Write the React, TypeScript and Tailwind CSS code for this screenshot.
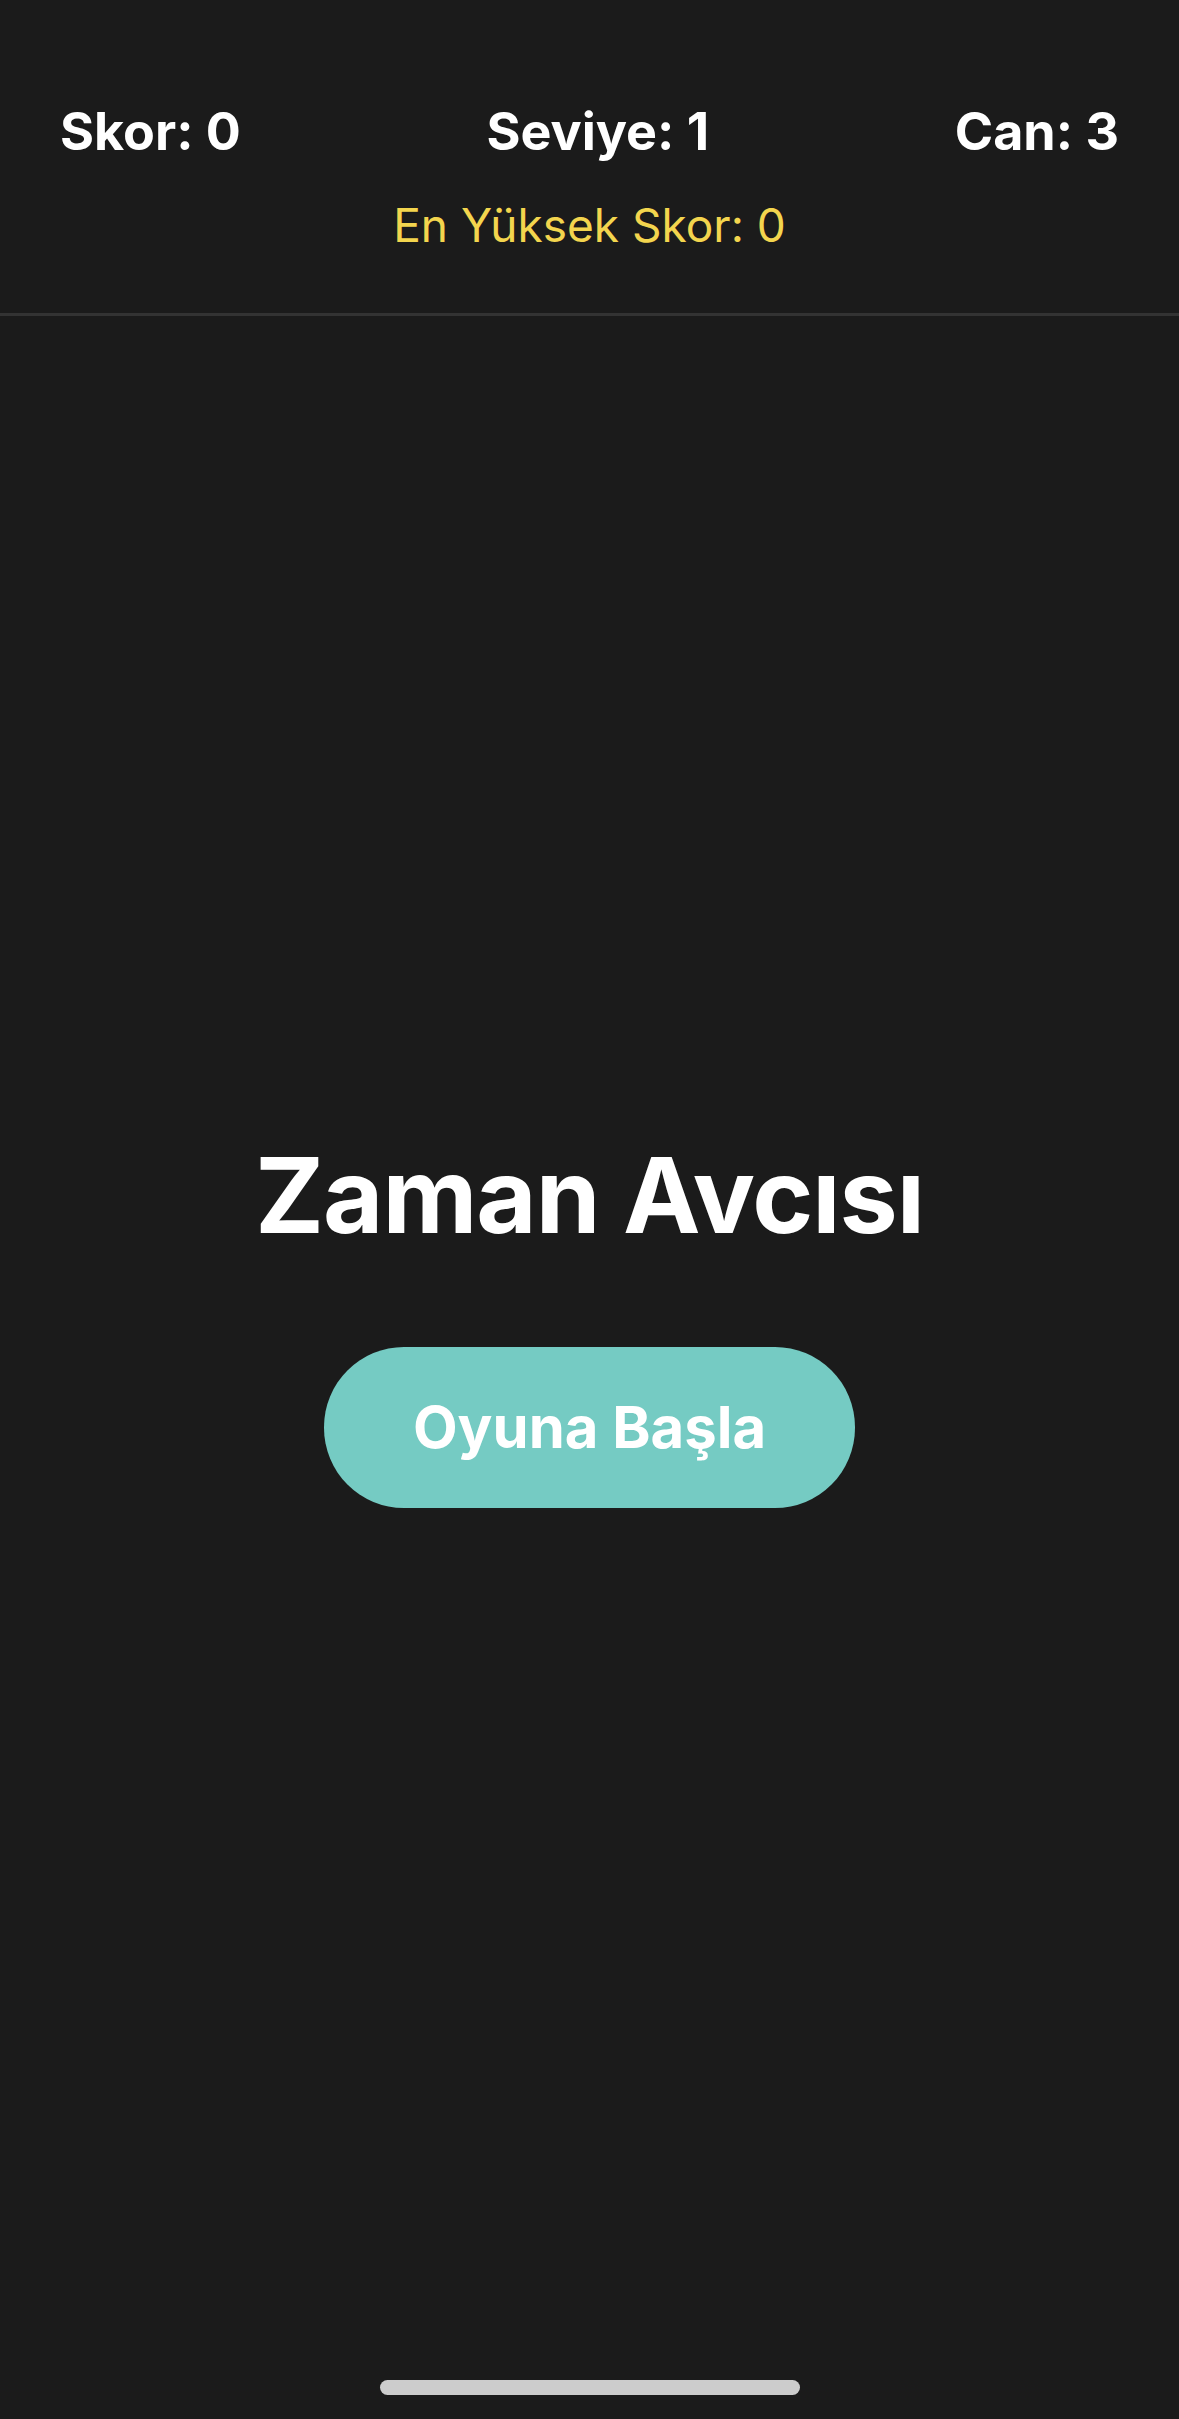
import React from "react";

// Zaman Avcısı – start screen
const STATS = [
  { label: "Skor", value: 0 },
  { label: "Seviye", value: 1 },
  { label: "Can", value: 3 },
];

export default function App() {
  return (
    <div
      className="relative flex min-h-[2419px] flex-col bg-[#1b1b1b] text-white"
      style={{ fontFamily: "Inter, 'Noto Sans', sans-serif" }}
    >
      {/* Top stats bar */}
      <header className="border-b-[3px] border-[#333333] px-[60px] pt-[100px] pb-[60px]">
        <div className="flex items-center justify-between">
          {STATS.map((s) => (
            <span key={s.label} className="text-[52px] font-bold leading-[64px]">
              {s.label}: {s.value}
            </span>
          ))}
        </div>
        <p className="mt-[33px] text-center text-[46px] leading-[56px] text-[#f3d54e]">
          En Yüksek Skor: 0
        </p>
      </header>

      {/* Start panel */}
      <main className="flex flex-1 flex-col items-center justify-center pb-[96px]">
        <h1 className="text-[104px] font-bold leading-[128px] tracking-[-1px]">Zaman Avcısı</h1>
        <button className="mt-[88px] h-[161px] w-[531px] rounded-[80px] bg-[#75cbc3] text-[58px] font-bold text-white">
          Oyuna Başla
        </button>
      </main>

      {/* Home indicator */}
      <div className="absolute bottom-[24px] left-1/2 h-[15px] w-[420px] -translate-x-1/2 rounded-full bg-[#cccccc]" />
    </div>
  );
}
